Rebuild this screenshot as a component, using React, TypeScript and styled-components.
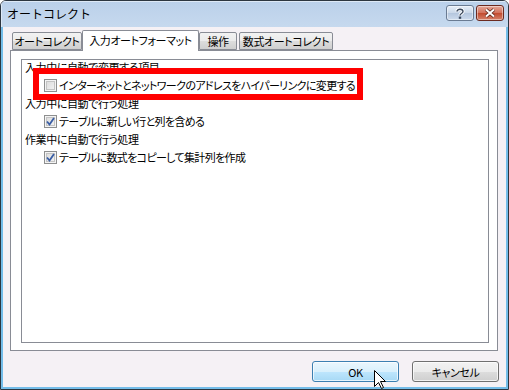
import React from "react";
import styled, { createGlobalStyle } from "styled-components";

const GlobalStyle = createGlobalStyle`
  html, body {
    margin: 0;
    padding: 0;
    background: #ffffff;
  }
  body {
    font-family: "Noto Sans CJK JP", "Liberation Sans", sans-serif;
    font-size: 11px;
    letter-spacing: -0.4px;
    color: #000;
  }
`;

const Window = styled.div`
  position: relative;
  width: 509px;
  height: 390px;
  box-sizing: border-box;
  border: 1px solid #2c3640;
  border-radius: 6px 6px 0 0;
  overflow: hidden;
  display: flex;
  flex-direction: column;
  background: #f5f1f5;
`;

const TitleBar = styled.div`
  height: 26px;
  flex: none;
  display: flex;
  justify-content: space-between;
  align-items: flex-start;
  padding: 0 4px 0 6px;
  background: linear-gradient(#bad0ea, #c6d9ee);
  box-shadow: inset 1px 1px 0 #dde9f6;
`;

const Title = styled.div`
  font-size: 12px;
  line-height: 26px;
  letter-spacing: 0;
`;

const TitleButtons = styled.div`
  display: flex;
  gap: 2px;
  padding-top: 4px;
`;

const CaptionButton = styled.div<{ $close?: boolean }>`
  width: 28px;
  height: 16px;
  box-sizing: border-box;
  border: 1px solid ${(p) => (p.$close ? "#6b2a20" : "#6a7b92")};
  border-radius: 3px;
  background: ${(p) =>
    p.$close
      ? "linear-gradient(#e4a89a, #d2705a 50%, #c24a2e 51%, #d5826b)"
      : "linear-gradient(#e6eef8, #c9d7e8 50%, #b4c6dd 51%, #cddbed)"};
  display: flex;
  align-items: center;
  justify-content: center;
  box-shadow: inset 0 0 0 1px rgba(255, 255, 255, 0.45);
`;

const Body = styled.div`
  flex: 1;
  display: flex;
  flex-direction: column;
  border: 2px solid #74bde9;
  border-top: none;
  padding-top: 3px;
`;

const TabRow = styled.div`
  display: flex;
  align-items: flex-end;
  margin-left: 9px;
  height: 20px;
  position: relative;
  z-index: 1;
`;

const Tab = styled.div<{ $active?: boolean; $w: number; $gap?: number }>`
  width: ${(p) => p.$w}px;
  margin-left: ${(p) => p.$gap ?? 0}px;
  box-sizing: border-box;
  height: ${(p) => (p.$active ? 21 : 18)}px;
  margin-bottom: ${(p) => (p.$active ? -1 : 0)}px;
  border: 1px solid #898c95;
  border-bottom: ${(p) => (p.$active ? "none" : "1px solid #898c95")};
  border-radius: 2px 2px 0 0;
  background: ${(p) =>
    p.$active ? "#ffffff" : "linear-gradient(#f2f2f2, #ebebeb 50%, #dddddd 51%, #cfcfcf)"};
  display: flex;
  align-items: center;
  justify-content: center;
  line-height: 16px;
  white-space: nowrap;
  font-feature-settings: "palt";
  padding-bottom: ${(p) => (p.$active ? 2 : 0)}px;
`;

const Panel = styled.div`
  margin-left: 7px;
  width: 488px;
  height: 301px;
  box-sizing: border-box;
  border: 1px solid #898c95;
  background: #ffffff;
  padding: 8px 8px 7px 10px;
  display: flex;
`;

const Frame = styled.div`
  position: relative;
  flex: 1;
  border: 1px solid #898c95;
  background: #ffffff;
`;

const List = styled.div`
  margin-top: -2px;
`;

const GroupLabel = styled.div`
  height: 18px;
  line-height: 18px;
  padding-left: 3px;
  font-feature-settings: "palt";
  white-space: nowrap;
`;

const Option = styled.div`
  height: 18px;
  display: flex;
  align-items: center;
  padding-left: 22px;
  gap: 2px;
  letter-spacing: -0.65px;
  font-feature-settings: "palt";
  white-space: nowrap;
`;

const Box = styled.span`
  width: 13px;
  height: 13px;
  box-sizing: border-box;
  border: 1px solid #8e8f8f;
  background: linear-gradient(135deg, #d8d8d8, #f6f6f6);
  box-shadow: inset 0 0 0 1px #f4f4f4, inset 0 0 0 2px #c4c4c4;
  display: flex;
  align-items: center;
  justify-content: center;
  flex: none;
`;

const Highlight = styled.div`
  position: absolute;
  left: 11px;
  top: 8px;
  width: 330px;
  height: 32px;
  box-sizing: border-box;
  border: 6px solid #ff0000;
`;

const ButtonRow = styled.div`
  display: flex;
  justify-content: flex-end;
  gap: 13px;
  margin-top: 10px;
  margin-right: 7px;
`;

const Button = styled.div<{ $hot?: boolean }>`
  position: relative;
  width: 87px;
  height: 21px;
  box-sizing: border-box;
  border: 1px solid ${(p) => (p.$hot ? "#3c7fb1" : "#707070")};
  border-radius: 3px;
  background: ${(p) =>
    p.$hot
      ? "linear-gradient(#eaf6fd, #d9f0fc 50%, #bee6fd 51%, #a7d9f5)"
      : "linear-gradient(#f2f2f2, #ebebeb 50%, #dddddd 51%, #cfcfcf)"};
  box-shadow: inset 0 0 0 1px rgba(255, 255, 255, 0.7);
  display: flex;
  align-items: center;
  justify-content: center;
  font-feature-settings: "palt";
`;

const Pointer = styled.svg`
  position: absolute;
  left: 61px;
  top: 8px;
`;

function CheckBox({ checked }: { checked?: boolean }) {
  return (
    <Box>
      {checked && (
        <svg width="9" height="9" viewBox="0 0 9 9">
          <path d="M1 4.5 L3.5 7.5 L8 1" fill="none" stroke="#3a5ea5" strokeWidth="1.8" />
        </svg>
      )}
    </Box>
  );
}

export default function App() {
  return (
    <>
      <GlobalStyle />
      <Window>
        <TitleBar>
          <Title>オートコレクト</Title>
          <TitleButtons>
            <CaptionButton>
              <svg width="10" height="11" viewBox="0 0 10 11">
                <path
                  d="M2 3.5 C2 0.5 8 0.5 8 3.5 C8 5.5 5 5.5 5 7.5"
                  fill="none"
                  stroke="#ffffff"
                  strokeWidth="3.2"
                />
                <path
                  d="M2 3.5 C2 0.5 8 0.5 8 3.5 C8 5.5 5 5.5 5 7.5"
                  fill="none"
                  stroke="#3c4a5e"
                  strokeWidth="1.4"
                />
                <rect x="3.8" y="8.6" width="2.4" height="2.2" fill="#3c4a5e" />
              </svg>
            </CaptionButton>
            <CaptionButton $close>
              <svg width="12" height="10" viewBox="0 0 12 10">
                <path d="M2 1.5 L10 8.5 M10 1.5 L2 8.5" stroke="#5a2318" strokeWidth="3.6" />
                <path d="M2 1.5 L10 8.5 M10 1.5 L2 8.5" stroke="#ffffff" strokeWidth="2" />
              </svg>
            </CaptionButton>
          </TitleButtons>
        </TitleBar>
        <Body>
          <TabRow>
            <Tab $w={70}>オートコレクト</Tab>
            <Tab $w={117} $active>
              入力オートフォーマット
            </Tab>
            <Tab $w={38}>操作</Tab>
            <Tab $w={94} $gap={2}>
              数式オートコレクト
            </Tab>
          </TabRow>
          <Panel>
            <Frame>
              <List>
                <GroupLabel>入力中に自動で変更する項目</GroupLabel>
                <Option>
                  <CheckBox />
                  インターネットとネットワークのアドレスをハイパーリンクに変更する
                </Option>
                <GroupLabel>入力中に自動で行う処理</GroupLabel>
                <Option>
                  <CheckBox checked />
                  テーブルに新しい行と列を含める
                </Option>
                <GroupLabel>作業中に自動で行う処理</GroupLabel>
                <Option>
                  <CheckBox checked />
                  テーブルに数式をコピーして集計列を作成
                </Option>
              </List>
              <Highlight />
            </Frame>
          </Panel>
          <ButtonRow>
            <Button $hot>
              OK
              <Pointer width="13" height="20" viewBox="0 0 13 20">
                <path
                  d="M0.5 0.5 L0.5 16.5 L4.5 12.5 L7.5 18.5 L9.5 17.5 L6.5 11.5 L11.5 11.5 Z"
                  fill="#ffffff"
                  stroke="#000000"
                  strokeWidth="1"
                />
              </Pointer>
            </Button>
            <Button>キャンセル</Button>
          </ButtonRow>
        </Body>
      </Window>
    </>
  );
}
